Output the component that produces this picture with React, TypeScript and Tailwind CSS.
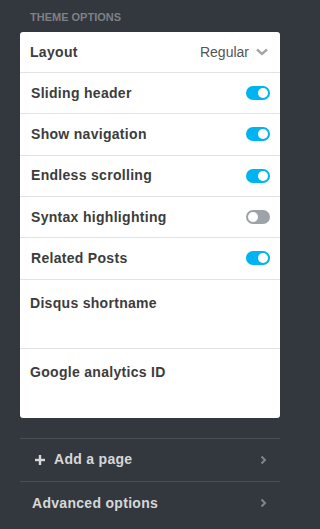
import React from "react";

const font = { fontFamily: '"Liberation Sans", Arial, sans-serif' };

function Toggle({ on }: { on: boolean }) {
  return (
    <span
      className={`flex h-[14px] w-[24px] items-center rounded-full px-[2px] ${
        on ? "justify-end bg-[#00b4f0]" : "justify-start bg-[#9ea3aa]"
      }`}
    >
      <span className="h-[10px] w-[10px] rounded-full bg-white" />
    </span>
  );
}

function Row({ label, on }: { label: string; on: boolean }) {
  return (
    <div className="flex h-[41.33px] items-center justify-between border-b border-[#e3e3e3] pl-[11px] pr-[10px]">
      <span className="text-[14px] font-bold tracking-[0.3px] text-[#3c3c3c]">{label}</span>
      <Toggle on={on} />
    </div>
  );
}

function ChevronRight() {
  return (
    <svg width="7" height="10" viewBox="0 0 7 10" fill="none">
      <path d="M1.5 1.5 L5 5 L1.5 8.5" stroke="#80858c" strokeWidth="2" />
    </svg>
  );
}

export default function App() {
  return (
    <div className="min-h-[529px] w-full bg-[#33373e]" style={font}>
      <div className="w-[297px] pl-5 pr-[17px] pt-[10px]">
        <div className="pl-[10px] text-[11px] font-bold leading-[14px] text-[#7d8187]">THEME OPTIONS</div>
        <div className="mt-[8px] overflow-hidden rounded-[3px] bg-white">
          <div className="flex h-[41px] items-center justify-between border-b border-[#e3e3e3] pl-[10px] pr-[12px]">
            <span className="text-[14px] font-bold tracking-[0.3px] text-[#3c3c3c]">Layout</span>
            <span className="flex items-center gap-[7px] text-[14px] text-[#555]">
              Regular
              <svg width="12" height="8" viewBox="0 0 12 8" fill="none">
                <path d="M1 1.5 L6 6 L11 1.5" stroke="#a5a5a5" strokeWidth="2.4" />
              </svg>
            </span>
          </div>
          <Row label="Sliding header" on />
          <Row label="Show navigation" on />
          <Row label="Endless scrolling" on />
          <Row label="Syntax highlighting" on={false} />
          <Row label="Related Posts" on />
          <div className="h-[69px] border-b border-[#e3e3e3] pl-[10px] pt-[11px]">
            <span className="text-[14px] font-bold tracking-[0.3px] text-[#3c3c3c]">Disqus shortname</span>
          </div>
          <div className="h-[69px] pl-[10px] pt-[11px]">
            <span className="text-[14px] font-bold tracking-[0.3px] text-[#3c3c3c]">Google analytics ID</span>
          </div>
        </div>
        <div className="mt-[20px] border-t border-[#4a4e55]">
          <div className="flex h-[43px] items-center justify-between border-b border-[#4a4e55] pl-[15px] pr-[13px]">
            <span className="flex items-center gap-[9px] text-[14px] font-bold tracking-[0.3px] text-[#d6d7d9]">
              <svg width="10" height="10" viewBox="0 0 10 10">
                <rect x="3.8" y="0" width="2.4" height="10" fill="#d6d7d9" />
                <rect x="0" y="3.8" width="10" height="2.4" fill="#d6d7d9" />
              </svg>
              Add a page
            </span>
            <ChevronRight />
          </div>
          <div className="flex h-[43px] items-center justify-between pl-[12px] pr-[13px]">
            <span className="text-[14px] font-bold tracking-[0.3px] text-[#d6d7d9]">Advanced options</span>
            <ChevronRight />
          </div>
        </div>
      </div>
    </div>
  );
}
